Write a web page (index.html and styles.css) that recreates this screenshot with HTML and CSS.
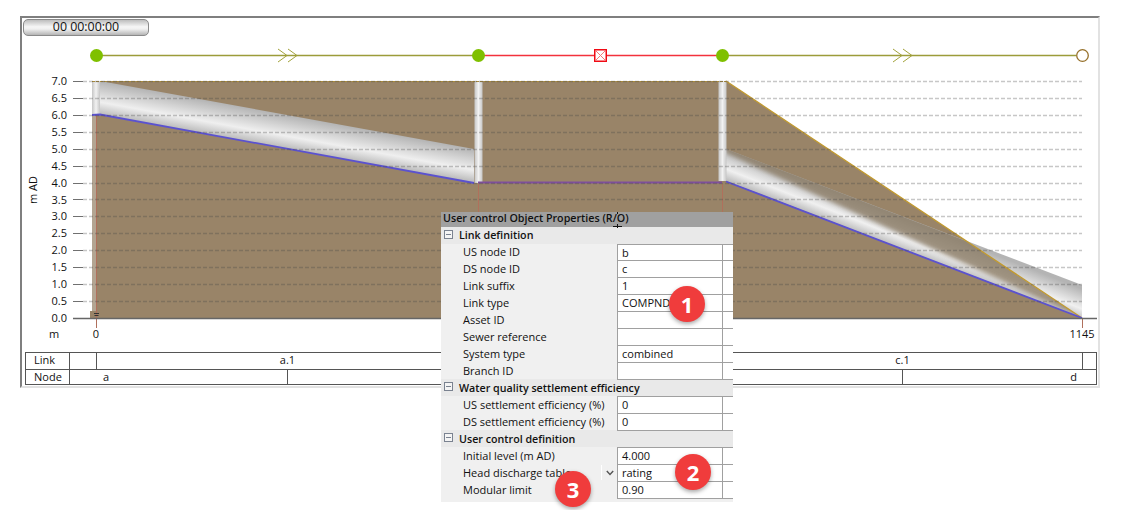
FILE: index.html
```html
<!DOCTYPE html>
<html lang="en">
<head>
<meta charset="utf-8">
<title>Long section</title>
<link rel="stylesheet" href="styles.css">
</head>
<body>
<main class="panel">
  <div class="clock">00 00:00:00</div>
  <svg class="chart" width="1077" height="316" viewBox="22 36 1077 316">
    <defs>
      <linearGradient id="pipeA" gradientUnits="userSpaceOnUse" x1="100" y1="81" x2="94" y2="114">
        <stop offset="0" stop-color="#b4b4b4"/><stop offset=".62" stop-color="#efefef"/><stop offset="1" stop-color="#b8b8b8"/>
      </linearGradient>
      <linearGradient id="pipeC" gradientUnits="userSpaceOnUse" x1="726" y1="149" x2="715" y2="177">
        <stop offset="0" stop-color="#b4b4b4"/><stop offset=".62" stop-color="#f0f0f0"/><stop offset="1" stop-color="#b8b8b8"/>
      </linearGradient>
      <linearGradient id="shaft" x1="0" x2="1" y1="0" y2="0">
        <stop offset="0" stop-color="#c6c6c6"/><stop offset=".5" stop-color="#f2f2f2"/><stop offset="1" stop-color="#c6c6c6"/>
      </linearGradient>
      <clipPath id="pipeInGround"><polygon points="726,149 966,241 1082,318 726,181"/></clipPath>
      <filter id="soften" x="-10%" y="-10%" width="120%" height="120%"><feGaussianBlur stdDeviation="2"/></filter>
    </defs>

    <!-- schematic -->
    <line class="link-green" x1="96" y1="55.5" x2="478" y2="55.5"/>
    <line class="link-red" x1="478" y1="55.5" x2="722" y2="55.5"/>
    <line class="link-green" x1="722" y1="55.5" x2="1076" y2="55.5"/>
    <path class="chevrons" d="M278 49l9 6.500l-9 6.500M288 49l9 6.500l-9 6.500M893 49l9 6.500l-9 6.500M903 49l9 6.500l-9 6.500"/>
    <circle class="node" cx="96.500" cy="55.500" r="6.500"/>
    <circle class="node" cx="478.500" cy="55.500" r="6.500"/>
    <circle class="node" cx="722.500" cy="55.500" r="6.500"/>
    <rect class="control-box" x="594.750" y="49.750" width="11.500" height="11.500"/>
    <path class="control-cross" d="M595.500 50.500l10 10M605.500 50.500l-10 10"/>
    <circle class="outfall" cx="1082.500" cy="55.500" r="5.800"/>

    <!-- ground and pipes -->
    <polygon class="ground" points="96,81 726,81 1082,318 96,318"/>
    <rect class="ground-edge" x="92" y="115" width="4" height="196"/>
    <rect class="ground" x="90" y="311" width="7" height="7"/>
    <polygon fill="url(#pipeC)" points="726,149 1082,285 1082,318 726,181"/>
    <polygon class="ground-shade" clip-path="url(#pipeInGround)" filter="url(#soften)" points="726,100 1100,100 1082,318 726,153"/>
    <polygon fill="url(#pipeA)" points="100,81 474,149 474,183 100,115"/>
    <rect fill="url(#shaft)" x="92" y="81" width="8" height="34"/>
    <rect fill="url(#shaft)" x="474.500" y="81" width="8" height="102"/>
    <rect fill="url(#shaft)" x="718.500" y="81" width="8" height="100"/>
    <line class="crown" x1="92" y1="81.500" x2="726" y2="81.500"/>
    <line class="crown-solid" x1="726" y1="81" x2="1082" y2="318"/>
    <path class="invert" d="M92 115l8-.500L474 183M726 181.500L1082 318"/>
    <line class="invert-mid" x1="478" y1="182.500" x2="722" y2="182.500"/>
    <path class="drop" d="M96.500 116V328M478.500 184V214M722.500 184V214M1082.500 318V328"/>
    <path class="pointer" d="M94 313.500h5M94.500 315.500h4"/>

    <!-- grid -->
    <path class="grid" d="M83 81.500H1082M83 98.500H1082M83 115.500H1082M83 132.500H1082M83 149.500H1082M83 166.500H1082M83 183.500H1082M83 199.500H1082M83 216.500H1082M83 233.500H1082M83 250.500H1082M83 267.500H1082M83 284.500H1082M83 301.500H1082"/>
    <path class="ticks" d="M73 81.500H83M73 98.500H83M73 115.500H83M73 132.500H83M73 149.500H83M73 166.500H83M73 183.500H83M73 199.500H83M73 216.500H83M73 233.500H83M73 250.500H83M73 267.500H83M73 284.500H83M73 301.500H83"/>
    <line class="baseline" x1="73" y1="318.500" x2="1097" y2="318.500"/>

    <!-- axis text -->
    <g class="label end">
      <text x="67" y="85">7.0</text><text x="67" y="102">6.5</text><text x="67" y="119">6.0</text>
      <text x="67" y="136">5.5</text><text x="67" y="153">5.0</text><text x="67" y="170">4.5</text>
      <text x="67" y="187">4.0</text><text x="67" y="204">3.5</text><text x="67" y="220">3.0</text>
      <text x="67" y="237">2.5</text><text x="67" y="254">2.0</text><text x="67" y="271">1.5</text>
      <text x="67" y="288">1.0</text><text x="67" y="305">0.5</text><text x="67" y="322">0.0</text>
    </g>
    <g class="label middle">
      <text x="54" y="338">m</text>
      <text x="96" y="338">0</text>
      <text x="1082" y="338">1145</text>
      <text transform="translate(37 190) rotate(-90)">m AD</text>
    </g>
  </svg>
  <div class="track">
    <div class="track-row">
      <div class="cell w-label">Link</div>
      <div class="cell w-stub"></div>
      <div class="cell w-a1">a.1</div>
      <div class="cell w-b1"></div>
      <div class="cell w-c1">c.1</div>
      <div class="cell w-end"></div>
    </div>
    <div class="track-row">
      <div class="cell w-label">Node</div>
      <div class="cell w-na">a</div>
      <div class="cell w-nb"></div>
      <div class="cell w-nc"></div>
      <div class="cell w-nd">d</div>
    </div>
  </div>
</main>

<aside class="props">
  <div class="props-title">User control Object Properties (R/O)</div>
  <div class="group first"><span class="toggle"></span><span class="group-name">Link definition</span><span class="group-rest"></span></div>
  <div class="row short"><span class="name">US node ID</span><span class="value">b</span><span class="stub"></span></div>
  <div class="row"><span class="name">DS node ID</span><span class="value">c</span><span class="stub"></span></div>
  <div class="row"><span class="name">Link suffix</span><span class="value">1</span><span class="stub"></span></div>
  <div class="row"><span class="name">Link type</span><span class="value">COMPND</span><span class="stub"></span></div>
  <div class="row"><span class="name">Asset ID</span><span class="value"></span><span class="stub"></span></div>
  <div class="row"><span class="name">Sewer reference</span><span class="value"></span><span class="stub"></span></div>
  <div class="row"><span class="name">System type</span><span class="value">combined</span><span class="stub"></span></div>
  <div class="row"><span class="name">Branch ID</span><span class="value"></span><span class="stub"></span></div>
  <div class="group"><span class="toggle"></span><span class="group-name">Water quality settlement efficiency</span><span class="group-rest"></span></div>
  <div class="row"><span class="name">US settlement efficiency (%)</span><span class="value">0</span><span class="stub"></span></div>
  <div class="row"><span class="name">DS settlement efficiency (%)</span><span class="value">0</span><span class="stub"></span></div>
  <div class="group"><span class="toggle"></span><span class="group-name">User control definition</span><span class="group-rest"></span></div>
  <div class="row"><span class="name">Initial level (m AD)</span><span class="value">4.000</span><span class="stub"></span></div>
  <div class="row"><span class="name with-drop">Head discharge table
    <span class="drop-btn"><svg width="8" height="6" viewBox="0 0 8 6"><path d="M.8 1l3.200 3.500L7.200 1"/></svg></span></span><span class="value">rating</span><span class="stub"></span></div>
  <div class="row last"><span class="name">Modular limit</span><span class="value">0.90</span><span class="stub"></span></div>
  <svg class="cursor" width="9" height="17" viewBox="0 0 9 17"><path d="M4.500 0v2M4.500 12v4M0 14.500h9"/></svg>
</aside>

<div class="badge badge-1">1</div>
<div class="badge badge-2">2</div>
<div class="badge badge-3">3</div>
</body>
</html>
```

FILE: styles.css
```css
* { box-sizing: border-box; }
html, body { margin: 0; padding: 0; background: #fff; }
body {
  width: 1122px;
  height: 510px;
  overflow: hidden;
  position: relative;
  padding: 16px 0 0 20px;
  font-family: "Open Sans", "Noto Sans", sans-serif;
  font-size: 11px;
  color: #111;
}

.panel {
  width: 1080px;
  height: 372px;
  border: 2px solid #e2e2e2;
  border-top-color: #7f7f7f;
  border-left-color: #7f7f7f;
}

.clock {
  width: 126px;
  height: 17px;
  margin: 1px 0 0 1px;
  border: 1px solid #8a8a8a;
  border-radius: 5px;
  background: linear-gradient(#bdbdbd, #f6f6f6 45%, #f0f0f0 60%, #b5b5b5);
  text-align: center;
  font-size: 12.4px;
  line-height: 14px;
}

.chart { display: block; }
.chart text { font-family: "Open Sans", "Noto Sans", sans-serif; font-size: 11px; fill: #111; }
.label.end text { text-anchor: end; }
.label.middle text { text-anchor: middle; }

.link-green { stroke: #9c9c3a; stroke-width: 1.500; }
.link-red { stroke: #f3323c; stroke-width: 1.500; }
.chevrons { fill: none; stroke: #a3a33c; stroke-width: 1; }
.node { fill: #7fc000; }
.control-box { fill: #fff; stroke: #f00a14; stroke-width: 1.500; }
.control-cross { stroke: #f47a7a; stroke-width: 1; }
.outfall { fill: #fff; stroke: #96702a; stroke-width: 1.300; }

.ground { fill: #998468; }
.ground-edge { fill: #b3a592; }
.ground-shade { fill: #8a7a64; opacity: .78; }
.crown { stroke: #a88a3c; stroke-width: 1; stroke-dasharray: 3 1; }
.crown-solid { stroke: #c29a2e; stroke-width: 1.300; }
.invert { fill: none; stroke: #5b52cf; stroke-width: 1.800; }
.invert-mid { stroke: #804f9e; stroke-width: 1.800; }
.drop { fill: none; stroke: #b0705c; stroke-width: 1; }
.pointer { fill: none; stroke: #333; stroke-width: 1; }
.grid { fill: none; stroke: rgba(70, 70, 70, .3); stroke-width: 1.500; stroke-dasharray: 4 2; }
.ticks { fill: none; stroke: #707070; stroke-width: 1.200; }
.baseline { stroke: #666; stroke-width: 1.400; }

.track {
  width: 1072px;
  height: 33px;
  margin-left: 3px;
  border: 1px solid #555;
}
.track-row { display: flex; height: 16px; }
.track-row + .track-row { height: 15px; border-top: 1px solid #555; }
.cell {
  border-right: 1px solid #555;
  text-align: center;
  line-height: 14px;
  white-space: nowrap;
}
.cell:last-child { border-right: 0; }
.w-label { width: 44px; text-align: left; padding-left: 8px; }
.w-stub { width: 27px; }
.w-a1 { width: 382px; }
.w-b1 { width: 244px; }
.w-c1 { width: 360px; }
.w-end { width: 13px; }
.w-na { width: 218px; text-align: left; padding-left: 33px; }
.w-nb { width: 313px; }
.w-nc { width: 302px; }
.w-nd { width: 193px; text-align: right; padding-right: 19px; }

.props {
  position: absolute;
  left: 441px;
  top: 212px;
  width: 292px;
  height: 290px;
  background: #f0f0f0;
}
.props-title {
  height: 15px;
  padding-left: 2px;
  background: #a0a0a0;
  font-size: 10.7px;
  font-weight: 600;
  line-height: 13px;
  white-space: nowrap;
}
.group {
  display: grid;
  grid-template-columns: 176px 116px;
  height: 17px;
  background: #e9e9e9;
  position: relative;
}
.group-name {
  padding: 1px 0 0 18px;
  font-size: 10.7px;
  font-weight: 600;
  line-height: 16px;
  white-space: nowrap;
}
.group.first .group-name { padding-top: 0; }
.group-rest { border-top: 1px solid #a0a0a0; }
.group.first .group-rest { border-top: 0; }
.toggle {
  position: absolute;
  left: 3px;
  top: 3px;
  width: 9px;
  height: 9px;
  border: 1px solid #7a8290;
  background: linear-gradient(#7a8290, #7a8290) center / 5px 1px no-repeat #f4f4f4;
}
.row {
  display: grid;
  grid-template-columns: 176px 106px 10px;
  height: 17px;
  line-height: 16px;
}
.row.short { height: 16px; line-height: 15px; }
.row.last { height: 18px; }
.name {
  position: relative;
  padding: 1px 0 0 22px;
  white-space: nowrap;
}
.row.short .name { padding-top: 0; }
.value {
  padding: 0 0 0 4px;
  background: #fff;
  border-top: 1px solid #a0a0a0;
  border-left: 1px solid #a0a0a0;
  border-right: 1px solid #a0a0a0;
  white-space: nowrap;
}
.stub { background: #fff; border-top: 1px solid #a0a0a0; }
.row.last .value, .row.last .stub { border-bottom: 1px solid #a0a0a0; }
.drop-btn {
  position: absolute;
  right: 0;
  top: 1px;
  width: 16px;
  height: 15px;
  border-left: 1px solid #fff;
  display: flex;
  align-items: center;
  justify-content: center;
  background: #f0f0f0;
}
.drop-btn path { fill: none; stroke: #555; stroke-width: 1.400; }
.cursor {
  position: absolute;
  left: 172px;
  top: 0;
}
.cursor path { fill: none; stroke: #111; stroke-width: 1; }

.badge {
  position: absolute;
  width: 36px;
  height: 36px;
  border-radius: 50%;
  background: #f03c3c;
  box-shadow: 0 2px 4px rgba(0, 0, 0, .35);
  color: #fff;
  font-family: "Open Sans", sans-serif;
  font-size: 22px;
  font-weight: 700;
  line-height: 36px;
  text-align: center;
}
.badge-1 { left: 669px; top: 286px; }
.badge-2 { left: 675px; top: 454px; }
.badge-3 { left: 555px; top: 471px; }
```
